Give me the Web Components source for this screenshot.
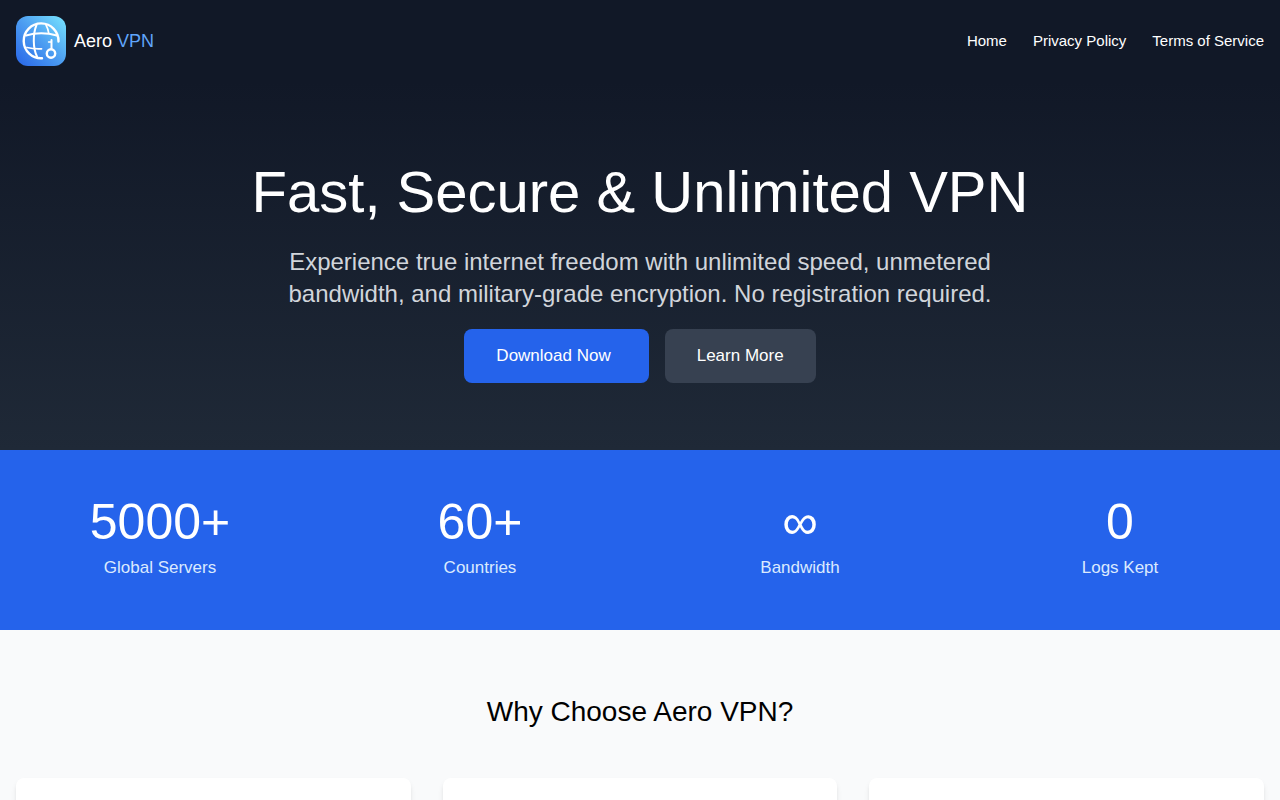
<!DOCTYPE html>
<html lang="en">
<head>
<meta charset="utf-8">
<meta name="viewport" content="width=device-width, initial-scale=1">
<title>Aero VPN</title>
<style>
  body { margin: 0; background: #f9fafb; color: #000; font-family: "Liberation Sans", Arial, sans-serif; font-size: 16px; line-height: 24px; }
</style>
</head>
<body>
<site-header>
  <nav-link href="#home">Home</nav-link>
  <nav-link href="#privacy">Privacy Policy</nav-link>
  <nav-link href="#terms">Terms of Service</nav-link>
</site-header>
<main>
  <hero-banner>
    <span slot="title">Fast, Secure &amp; Unlimited VPN</span>
    <span slot="lead">Experience true internet freedom with unlimited speed, unmetered bandwidth, and military-grade encryption. No registration required.</span>
    <action-button variant="primary">Download Now</action-button>
    <action-button>Learn More</action-button>
  </hero-banner>
  <stats-band>
    <stat-item value="5000+">Global Servers</stat-item>
    <stat-item value="60+">Countries</stat-item>
    <stat-item value="∞">Bandwidth</stat-item>
    <stat-item value="0">Logs Kept</stat-item>
  </stats-band>
  <feature-section>
    <span slot="title">Why Choose Aero VPN?</span>
    <feature-card></feature-card>
    <feature-card></feature-card>
    <feature-card></feature-card>
  </feature-section>
</main>
<script>
const define = (name, markup, setup) => customElements.define(name, class extends HTMLElement {
  constructor() {
    super();
    this.attachShadow({ mode: "open" }).innerHTML = markup;
  }
  connectedCallback() { if (setup) setup(this, this.shadowRoot); }
});

define("brand-mark", `
<style>
  :host { display: block; width: 50px; height: 50px; }
  svg { display: block; width: 100%; height: 100%; }
</style>
<svg viewBox="0 0 50 50" aria-hidden="true" fill="none" stroke="#fff" stroke-linecap="round">
  <defs>
    <linearGradient id="sky" x1="0" y1="1" x2="1" y2="0">
      <stop offset="0" stop-color="#2865e8"/>
      <stop offset=".5" stop-color="#4c9df1"/>
      <stop offset="1" stop-color="#78e5ff"/>
    </linearGradient>
  </defs>
  <rect width="50" height="50" rx="12" fill="url(#sky)" stroke="none"/>
  <path d="M42.5 25.5A17.4 17.4 0 1 0 26 42.2" stroke-width="2.4"/>
  <path d="M20.5 9C16.8 18 16.8 32 21 40.5" stroke-width="2"/>
  <path d="M30 9Q32.2 13 32.8 17.5" stroke-width="1.6"/>
  <path d="M10 19.5Q25 15 41 19.5" stroke-width="2"/>
  <path d="M11 31.5Q18 33.2 25.5 32.8" stroke-width="1.8"/>
  <path d="M35.5 24V33" stroke-width="2"/>
  <path d="M35 26H32.5" stroke-width="1.4"/>
  <circle cx="35" cy="37.5" r="4.2" stroke-width="2.4"/>
</svg>`);

define("nav-link", `
<style>
  :host { display: block; }
  a { color: #fff; text-decoration: none; font-size: 15px; line-height: 24px; white-space: nowrap; }
</style>
<a><slot></slot></a>`, (el, root) => { root.querySelector("a").href = el.getAttribute("href"); });

define("site-header", `
<style>
  :host { display: block; background: #111827; color: #fff; }
  header { display: flex; align-items: center; justify-content: space-between; padding: 16px; }
  .brand { display: flex; align-items: center; gap: 8px; color: inherit; text-decoration: none; font-size: 18px; line-height: 28px; }
  .brand em { font-style: normal; color: #60a5fa; }
  nav { display: flex; gap: 26px; }
</style>
<header>
  <a class="brand" href="#home"><brand-mark></brand-mark><span>Aero <em>VPN</em></span></a>
  <nav aria-label="Main"><slot></slot></nav>
</header>`);

define("action-button", `
<style>
  :host { display: block; }
  button { display: block; margin: 0; border: 0; border-radius: 8px; padding: 13px 32px; background: #374151; color: #fff; font: inherit; font-size: 17px; line-height: 28px; cursor: pointer; }
  :host([variant="primary"]) button { background: #2563eb; padding-right: 38px; }
</style>
<button type="button"><slot></slot></button>`);

define("hero-banner", `
<style>
  :host { display: block; background: linear-gradient(#111827, #1f2937); color: #fff; }
  section { padding: 80px 16px 67px; text-align: center; }
  h1 { margin: 0 0 24px; font-size: 58px; font-weight: 400; line-height: 60px; }
  p { max-width: 768px; margin: 0 auto 19px; color: #d1d5db; font-size: 24px; line-height: 32px; }
  .actions { display: flex; flex-wrap: wrap; justify-content: center; gap: 16px; }
</style>
<section>
  <h1><slot name="title"></slot></h1>
  <p><slot name="lead"></slot></p>
  <div class="actions"><slot></slot></div>
</section>`);

define("stat-item", `
<style>
  :host { display: block; text-align: center; }
  .value { margin-bottom: 8px; font-size: 50px; line-height: 48px; }
  .label { color: #dbeafe; font-size: 17px; line-height: 28px; }
</style>
<div class="value"></div>
<div class="label"><slot></slot></div>`, (el, root) => { root.querySelector(".value").textContent = el.getAttribute("value"); });

define("stats-band", `
<style>
  :host { display: block; background: #2563eb; color: #fff; }
  section { display: grid; grid-template-columns: repeat(4, 1fr); gap: 32px; padding: 48px 16px; }
</style>
<section><slot></slot></section>`);

define("feature-card", `
<style>
  :host { display: block; min-height: 176px; box-sizing: border-box; padding: 32px; border-radius: 8px; background: #fff; box-shadow: 0 4px 6px -1px rgb(0 0 0 / .1), 0 2px 4px -2px rgb(0 0 0 / .1); }
</style>
<slot></slot>`);

define("feature-section", `
<style>
  :host { display: block; background: #f9fafb; }
  section { padding: 64px 16px; }
  h2 { margin: 0 0 48px; font-size: 28px; font-weight: 400; line-height: 36px; text-align: center; }
  .cards { display: grid; grid-template-columns: repeat(3, 1fr); gap: 32px; }
</style>
<section>
  <h2><slot name="title"></slot></h2>
  <div class="cards"><slot></slot></div>
</section>`);
</script>
</body>
</html>
